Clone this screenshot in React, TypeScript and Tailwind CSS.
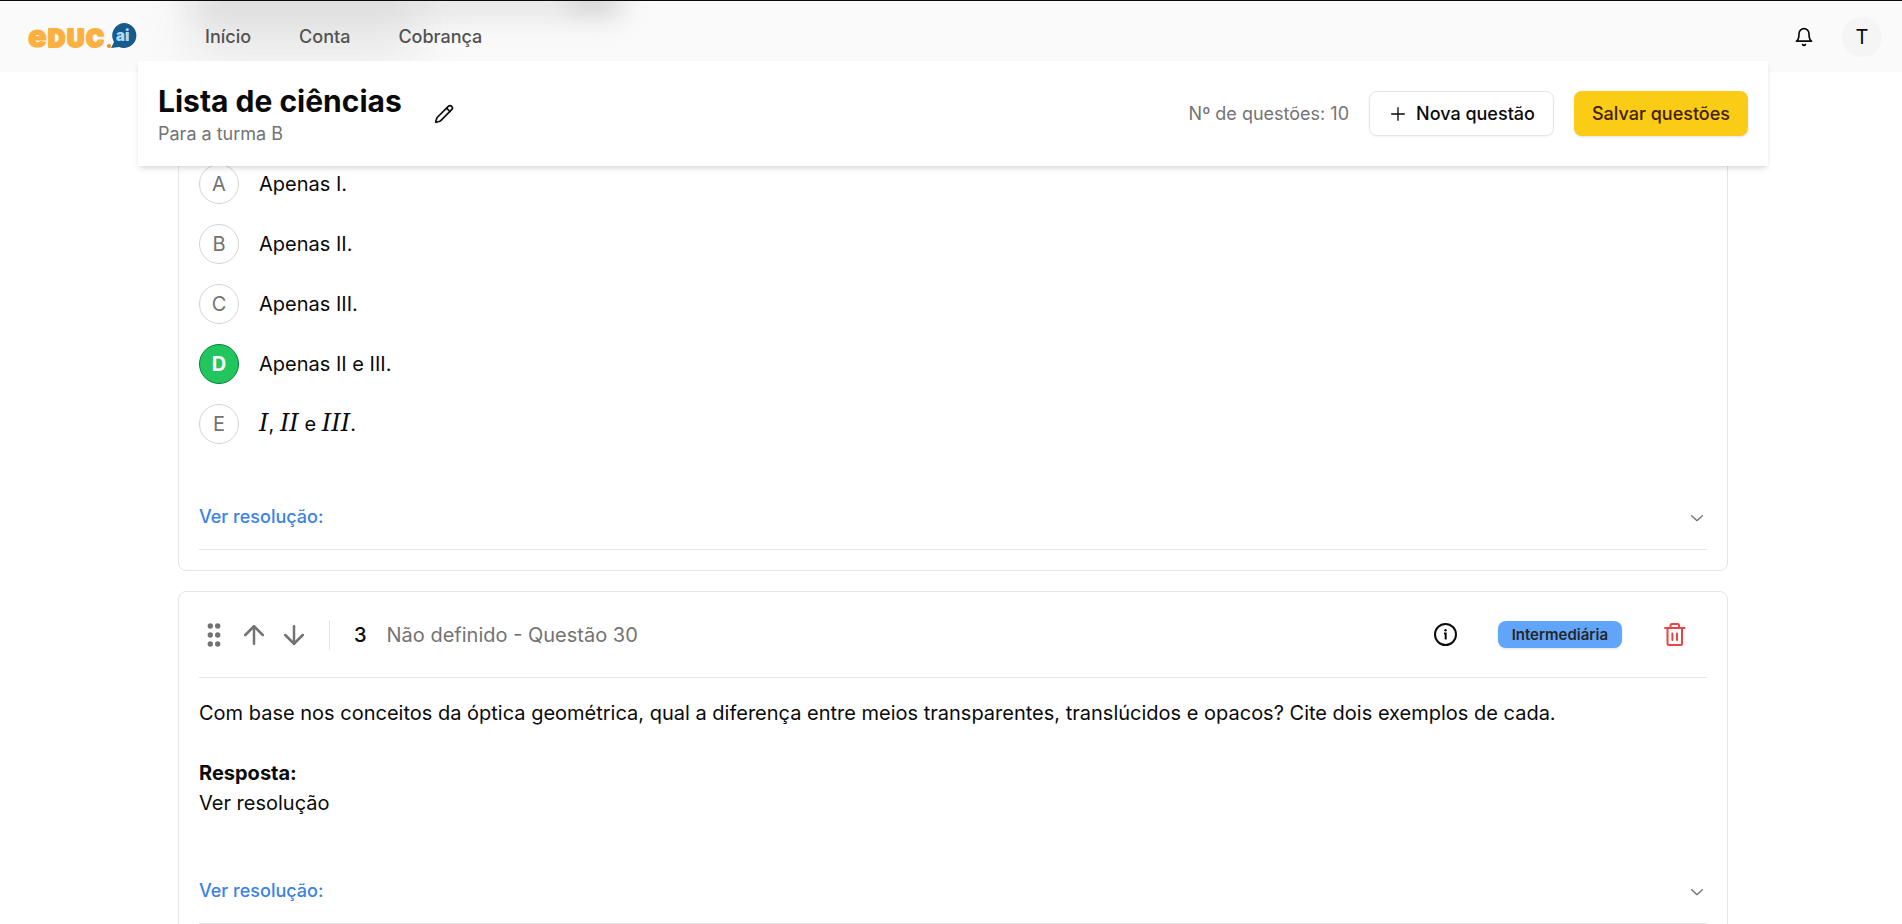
import type { ReactNode } from "react";
import { ArrowDown, ArrowUp, Pencil } from "lucide-react";
import { RxChevronDown, RxPlus } from "react-icons/rx";
import { clsx } from "clsx";

const options: { letter: string; text: ReactNode; correct?: boolean }[] = [
  { letter: "A", text: "Apenas I." },
  { letter: "B", text: "Apenas II." },
  { letter: "C", text: "Apenas III." },
  { letter: "D", text: "Apenas II e III.", correct: true },
  {
    letter: "E",
    text: (
      <>
        <Formula>I</Formula>, <Formula>II</Formula> e <Formula>III</Formula>.
      </>
    ),
  },
];

function Formula({ children }: { children: string }) {
  return <i className="font-['DejaVu_Serif',serif] text-2xl leading-none">{children}</i>;
}

function Logo() {
  return (
    <svg viewBox="0 0 110 36" className="h-9 w-[110px] overflow-visible" role="img" aria-label="educ.ai">
      <g fontFamily="Inter, sans-serif" fontWeight="900">
        <g fill="#fbb040" stroke="#fbb040" strokeLinejoin="round">
          <text x="0" y="28" fontSize="31" strokeWidth="1">e</text>
          <text x="20" y="28" fontSize="24" strokeWidth="2">D</text>
          <text x="39" y="28" fontSize="24" strokeWidth="2">U</text>
          <text x="58" y="28" fontSize="24" strokeWidth="2">C</text>
        </g>
        <circle cx="81" cy="27" r="2" fill="#f08a24" />
        <path d="M96 4a12.500 12.500 0 1 1-5 24l-8 1 3-6A12.500 12.500 0 0 1 96 4z" fill="#175a8c" />
        <text x="88" y="22" fontSize="15" fill="#a8dcff">ai</text>
      </g>
    </svg>
  );
}

function BellIcon() {
  return (
    <svg viewBox="0 0 24 24" className="size-5" fill="none" stroke="currentColor" strokeWidth="2" strokeLinecap="round" strokeLinejoin="round">
      <path d="M6 8a6 6 0 0 1 12 0c0 7 3 9 3 9H3s3-2 3-9" />
      <path d="M10.300 21a1.940 1.940 0 0 0 3.400 0" />
    </svg>
  );
}

function GripIcon() {
  return (
    <svg viewBox="0 0 30 30" className="size-[30px]" fill="currentColor">
      {[6, 15, 24].map((y) => (
        <g key={y}>
          <circle cx="11.300" cy={y} r="2.700" />
          <circle cx="18.700" cy={y} r="2.700" />
        </g>
      ))}
    </svg>
  );
}

function InfoIcon() {
  return (
    <svg viewBox="0 0 25 25" className="size-[25px]" fill="none" stroke="currentColor" strokeWidth="2">
      <circle cx="12.500" cy="12.500" r="10.500" />
      <path d="M11 11.500h1.700v6" />
      <circle cx="12.500" cy="8.300" r="1.200" fill="currentColor" stroke="none" />
    </svg>
  );
}

function TrashIcon() {
  return (
    <svg viewBox="0 0 25 25" className="size-[25px]" fill="none" stroke="currentColor" strokeWidth="2" strokeLinecap="round" strokeLinejoin="round">
      <path d="M3 6h19.500M8.500 6V3.500q0-1.500 1.500-1.500h5.500q1.500 0 1.500 1.500V6" />
      <path d="M5.500 6v15.500q0 1.500 1.500 1.500h11.500q1.500 0 1.500-1.500V6" />
      <path d="M10.400 11.500v6.500M15 11.500v6.500" />
    </svg>
  );
}

function Resolution() {
  return (
    <button className="mt-[41px] flex w-full items-center justify-between border-b border-neutral-200 py-5 text-lg leading-6 font-medium text-[#3b82e6]">
      Ver resolução:
      <RxChevronDown className="size-5 text-neutral-500" />
    </button>
  );
}

function Header() {
  return (
    <header className="relative flex h-[72px] shrink-0 items-center justify-between overflow-hidden border-t border-neutral-950 bg-neutral-50 pr-5 pl-7">
      <div className="absolute -top-3 left-48 h-[72px] w-56 bg-neutral-300/45 blur-xl" />
      <div className="absolute -top-2 left-48 h-5 w-[430px] bg-neutral-400/35 blur-lg" />
      <div className="absolute -top-2 left-[570px] h-4 w-12 bg-neutral-400/40 blur-md" />
      <div className="relative flex items-center">
        <Logo />
        <nav className="ml-[67px] flex gap-12 text-lg font-medium text-neutral-600">
          <a href="#">Início</a>
          <a href="#">Conta</a>
          <a href="#">Cobrança</a>
        </nav>
      </div>
      <div className="relative flex items-center gap-7">
        <button aria-label="Notificações">
          <BellIcon />
        </button>
        <button className="flex size-10 items-center justify-center rounded-full bg-neutral-100 text-xl">T</button>
      </div>
    </header>
  );
}

function Toolbar() {
  return (
    <section className="relative z-10 -mt-[11px] mr-[134px] ml-[138px] flex h-[105px] shrink-0 items-center justify-between bg-white px-5 shadow-md">
      <div className="flex items-center gap-8">
        <div className="pt-1">
          <h1 className="text-3xl leading-9 font-bold">Lista de ciências</h1>
          <p className="text-lg leading-[30px] text-neutral-500">Para a turma B</p>
        </div>
        <button aria-label="Editar lista">
          <Pencil className="size-5" />
        </button>
      </div>
      <div className="flex items-center gap-5 text-lg">
        <p className="text-neutral-500">Nº de questões: 10</p>
        <button className="flex h-[45px] items-center gap-2 rounded-lg border border-neutral-200 px-[18px] font-medium shadow-xs">
          <RxPlus className="size-5" />
          Nova questão
        </button>
        <button className="h-[45px] rounded-lg bg-[#facc15] px-[18px] font-medium text-[#422006] shadow-sm">Salvar questões</button>
      </div>
    </section>
  );
}

export default function App() {
  return (
    <div className="flex h-screen flex-col overflow-hidden bg-white font-['Inter',sans-serif] text-neutral-950">
      <Header />
      <Toolbar />
      <main className="-mt-5 flex flex-col gap-5 pr-[174px] pl-[178px] text-xl leading-[30px]">
        <article className="rounded-lg border border-neutral-200 px-5 pb-5">
          <ul className="flex flex-col gap-5 pt-[17px]">
            {options.map((option) => (
              <li key={option.letter} className="flex h-10 items-center gap-5">
                <span
                  className={clsx(
                    "flex size-10 items-center justify-center rounded-full border",
                    option.correct ? "border-green-700 bg-[#22c55e] font-bold text-white" : "border-neutral-300 text-neutral-500",
                  )}
                >
                  {option.letter}
                </span>
                <p>{option.text}</p>
              </li>
            ))}
          </ul>
          <Resolution />
        </article>

        <article className="rounded-lg border border-neutral-200 px-5 pb-5">
          <div className="flex h-[86px] items-center justify-between border-b border-neutral-200">
            <div className="flex items-center">
              <div className="flex gap-[10px] border-r border-neutral-200 pr-5 text-neutral-500">
                <button aria-label="Arrastar">
                  <GripIcon />
                </button>
                <button aria-label="Mover para cima">
                  <ArrowUp className="size-[30px]" />
                </button>
                <button aria-label="Mover para baixo">
                  <ArrowDown className="size-[30px]" />
                </button>
              </div>
              <span className="ml-6 font-medium">3</span>
              <h2 className="ml-5 text-neutral-500">Não definido - Questão 30</h2>
            </div>
            <div className="flex items-center gap-5">
              <button aria-label="Informações" className="flex w-[65px] justify-center">
                <InfoIcon />
              </button>
              <span className="rounded-lg bg-[#60a5fa] px-[14px] py-1 text-[15px] leading-[19px] font-semibold text-neutral-800 shadow-sm">
                Intermediária
              </span>
              <button aria-label="Excluir questão" className="flex w-[65px] justify-center text-[#e54545]">
                <TrashIcon />
              </button>
            </div>
          </div>
          <p className="mt-5">
            Com base nos conceitos da óptica geométrica, qual a diferença entre meios transparentes, translúcidos e opacos? Cite dois
            exemplos de cada.
          </p>
          <p className="mt-[30px] font-bold">Resposta:</p>
          <p>Ver resolução</p>
          <Resolution />
        </article>
      </main>
    </div>
  );
}
